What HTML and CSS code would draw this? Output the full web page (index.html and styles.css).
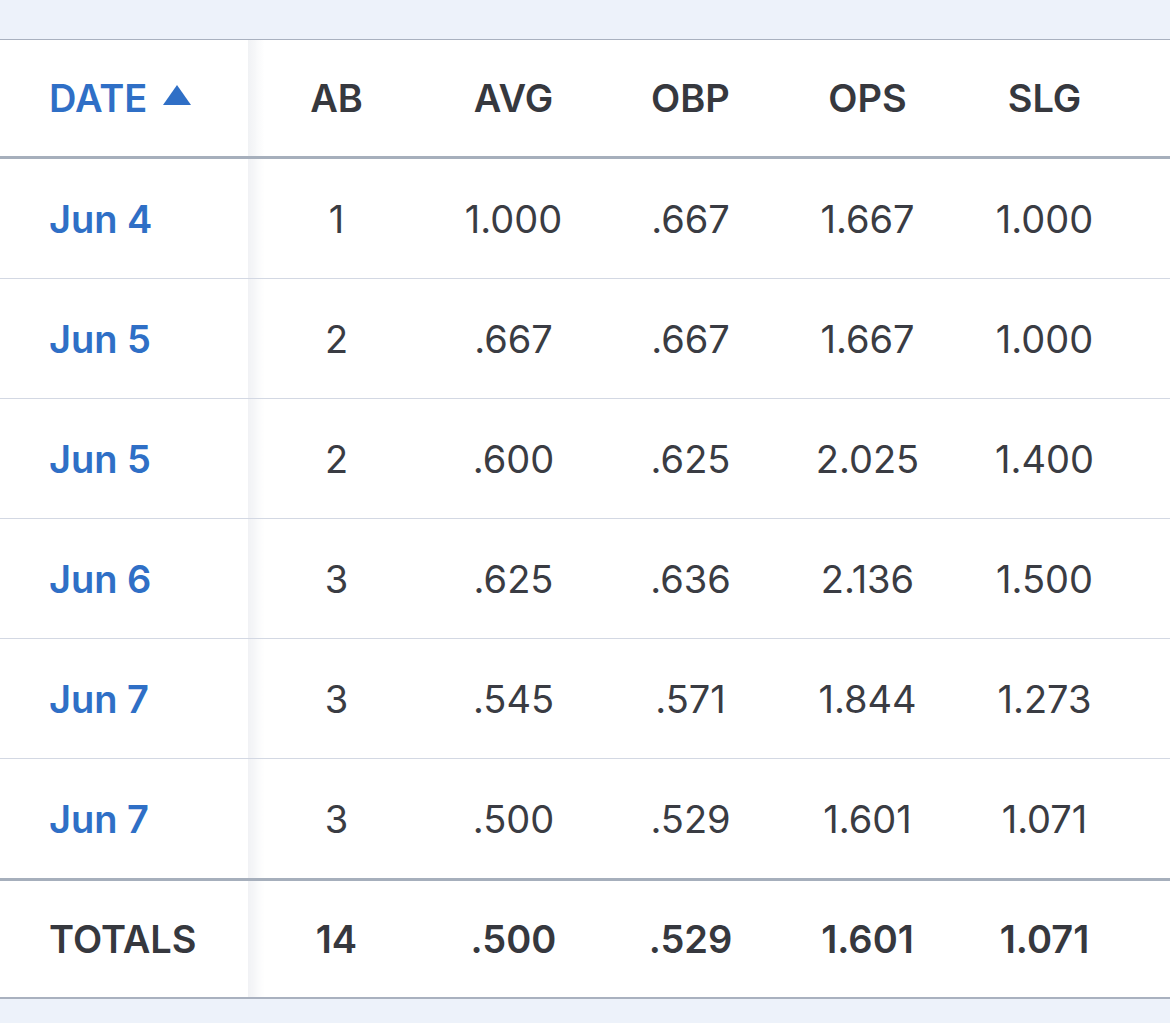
FILE: index.html
```html
<!DOCTYPE html>
<html lang="en">
<head>
<meta charset="utf-8">
<title>Game Log</title>
<link rel="stylesheet" href="styles.css">
</head>
<body>
<div class="page">
  <div class="table-wrap">
    <table class="stats">
      <colgroup>
        <col class="c-date">
        <col class="c-stat"><col class="c-stat"><col class="c-stat"><col class="c-stat"><col class="c-last">
      </colgroup>
      <thead>
        <tr>
          <th class="date sorted">DATE <span class="sort-arrow"></span></th>
          <th>AB</th><th>AVG</th><th>OBP</th><th>OPS</th><th class="last">SLG</th>
        </tr>
      </thead>
      <tbody>
        <tr><td class="date">Jun 4</td><td>1</td><td>1.000</td><td>.667</td><td>1.667</td><td class="last">1.000</td></tr>
        <tr><td class="date">Jun 5</td><td>2</td><td>.667</td><td>.667</td><td>1.667</td><td class="last">1.000</td></tr>
        <tr><td class="date">Jun 5</td><td>2</td><td>.600</td><td>.625</td><td>2.025</td><td class="last">1.400</td></tr>
        <tr><td class="date">Jun 6</td><td>3</td><td>.625</td><td>.636</td><td>2.136</td><td class="last">1.500</td></tr>
        <tr><td class="date">Jun 7</td><td>3</td><td>.545</td><td>.571</td><td>1.844</td><td class="last">1.273</td></tr>
        <tr><td class="date">Jun 7</td><td>3</td><td>.500</td><td>.529</td><td>1.601</td><td class="last">1.071</td></tr>
      </tbody>
      <tfoot>
        <tr><td class="date">TOTALS</td><td>14</td><td>.500</td><td>.529</td><td>1.601</td><td class="last">1.071</td></tr>
      </tfoot>
    </table>
  </div>
</div>
</body>
</html>
```
FILE: styles.css
```css
html, body {
  margin: 0;
  padding: 0;
  background: #edf2fa;
}
body {
  font-family: Inter, "Noto Sans", "Liberation Sans", sans-serif;
  color: #36383e;
}
.page {
  padding-top: 39px;
  height: 1023px;
  box-sizing: border-box;
}
.table-wrap {
  background: #ffffff;
  border-top: 1px solid #a9b1bf;
  border-bottom: 2px solid #a9b1bf;
}
.stats {
  width: 1170px;
  border-collapse: collapse;
  table-layout: fixed;
}
.c-date { width: 248px; }
.c-stat { width: 177px; }
.c-last { width: 214px; }

.stats th, .stats td {
  text-align: center;
  padding: 0;
  font-size: 38px;
  line-height: 1;
}
.stats th {
  height: 116px;
  font-weight: 600;
  border-bottom: 3px solid #a6afbc;
}
.stats tbody td {
  height: 119px;
  font-weight: 400;
  color: #3a3c43;
  border-bottom: 1px solid #d3d8e3;
}
.stats tbody tr:last-child td {
  border-bottom: none;
}
.stats tfoot td {
  height: 116px;
  font-weight: 600;
  border-top: 3px solid #a6afbc;
}
.stats .last {
  padding-right: 37px;
}
.stats .date {
  text-align: left;
  padding-left: 49px;
}
.stats th.date, .stats tbody td.date {
  color: #2f6fc6;
}
.stats tbody td.date {
  font-weight: 600;
}
.stats tfoot td.date {
  color: #36383e;
}
.stats th:nth-child(2), .stats td:nth-child(2) {
  background-image: linear-gradient(to right, rgba(40, 60, 100, 0.07), rgba(40, 60, 100, 0) 16px);
}
.sort-arrow {
  display: inline-block;
  width: 0;
  height: 0;
  margin-left: 6px;
  border-left: 14px solid transparent;
  border-right: 14px solid transparent;
  border-bottom: 20px solid #2f6fc6;
  vertical-align: 7px;
}
```
